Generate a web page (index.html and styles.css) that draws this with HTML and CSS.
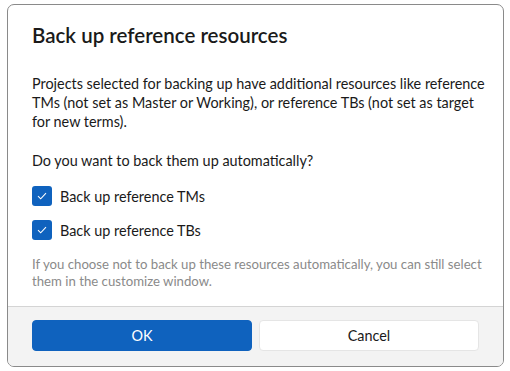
FILE: index.html
```html
<!DOCTYPE html>
<html lang="en">
<head>
    <meta charset="UTF-8">
    <title>Back up reference resources</title>
    <link rel="stylesheet" href="styles.css">
</head>
<body>

    <div class="dialog">
        <div class="content">
            <h2>Back up reference resources</h2>
            <p class="intro">Projects selected for backing up have additional resources like reference TMs (not set as Master or Working), or reference TBs (not set as target for new terms).</p>
            <p class="question">Do you want to back them up automatically?</p>
            <label class="check">
                <span class="box"><svg width="10" height="8" viewBox="0 0 10 8"><path d="M1 4.2 L3.7 6.8 L9 1.2" fill="none" stroke="#fff" stroke-width="1.1"/></svg></span>
                Back up reference TMs
            </label>
            <label class="check">
                <span class="box"><svg width="10" height="8" viewBox="0 0 10 8"><path d="M1 4.2 L3.7 6.8 L9 1.2" fill="none" stroke="#fff" stroke-width="1.1"/></svg></span>
                Back up reference TBs
            </label>
            <p class="hint">If you choose not to back up these resources automatically, you can still select them in the customize window.</p>
        </div>
        <div class="footer">
            <button class="primary">OK</button>
            <button>Cancel</button>
        </div>
    </div>

</body>
</html>
```

FILE: styles.css
```css
body {
    margin: 0;
    padding: 4px 7px;
    background: #fff;
    font-family: Lato, "Open Sans", sans-serif;
    font-size: 14.4px;
    color: #1a1a1a;
}
.dialog {
    width: 497px;
    height: 363px;
    border: 1px solid #8a8a8a;
    border-radius: 7px;
    overflow: hidden;
    display: flex;
    flex-direction: column;
    box-sizing: border-box;
}
.content {
    flex: 1;
    padding: 0 14px 0 24px;
}
h2 {
    margin: 17px 0 0;
    font-size: 20.5px;
    font-weight: 600;
    line-height: 26px;
}
.intro {
    margin: 26px 0 0;
    line-height: 19px;
}
.question {
    margin: 20px 0 0;
    line-height: 19px;
}
.check {
    display: flex;
    align-items: center;
    gap: 8px;
    height: 20px;
    margin-top: 14px;
}
.question + .check {
    margin-top: 16px;
}
.box {
    width: 20px;
    height: 20px;
    border-radius: 3px;
    background: #0f62be;
    display: flex;
    align-items: center;
    justify-content: center;
}
.hint {
    margin: 16px 0 0;
    color: #8a8a8a;
    font-size: 13.2px;
    line-height: 17px;
}
.footer {
    height: 60px;
    border-top: 1px solid #d4d4d4;
    background: #f3f3f3;
    display: flex;
    gap: 7px;
    padding: 13px 24px 0;
    box-sizing: border-box;
}
button {
    width: 220px;
    height: 31px;
    border: 1px solid #e5e5e5;
    border-radius: 4px;
    background: #fff;
    font-family: inherit;
    font-size: 14.4px;
    color: #1a1a1a;
}
button.primary {
    background: #0f62be;
    border-color: #0f62be;
    color: #fff;
}
```
